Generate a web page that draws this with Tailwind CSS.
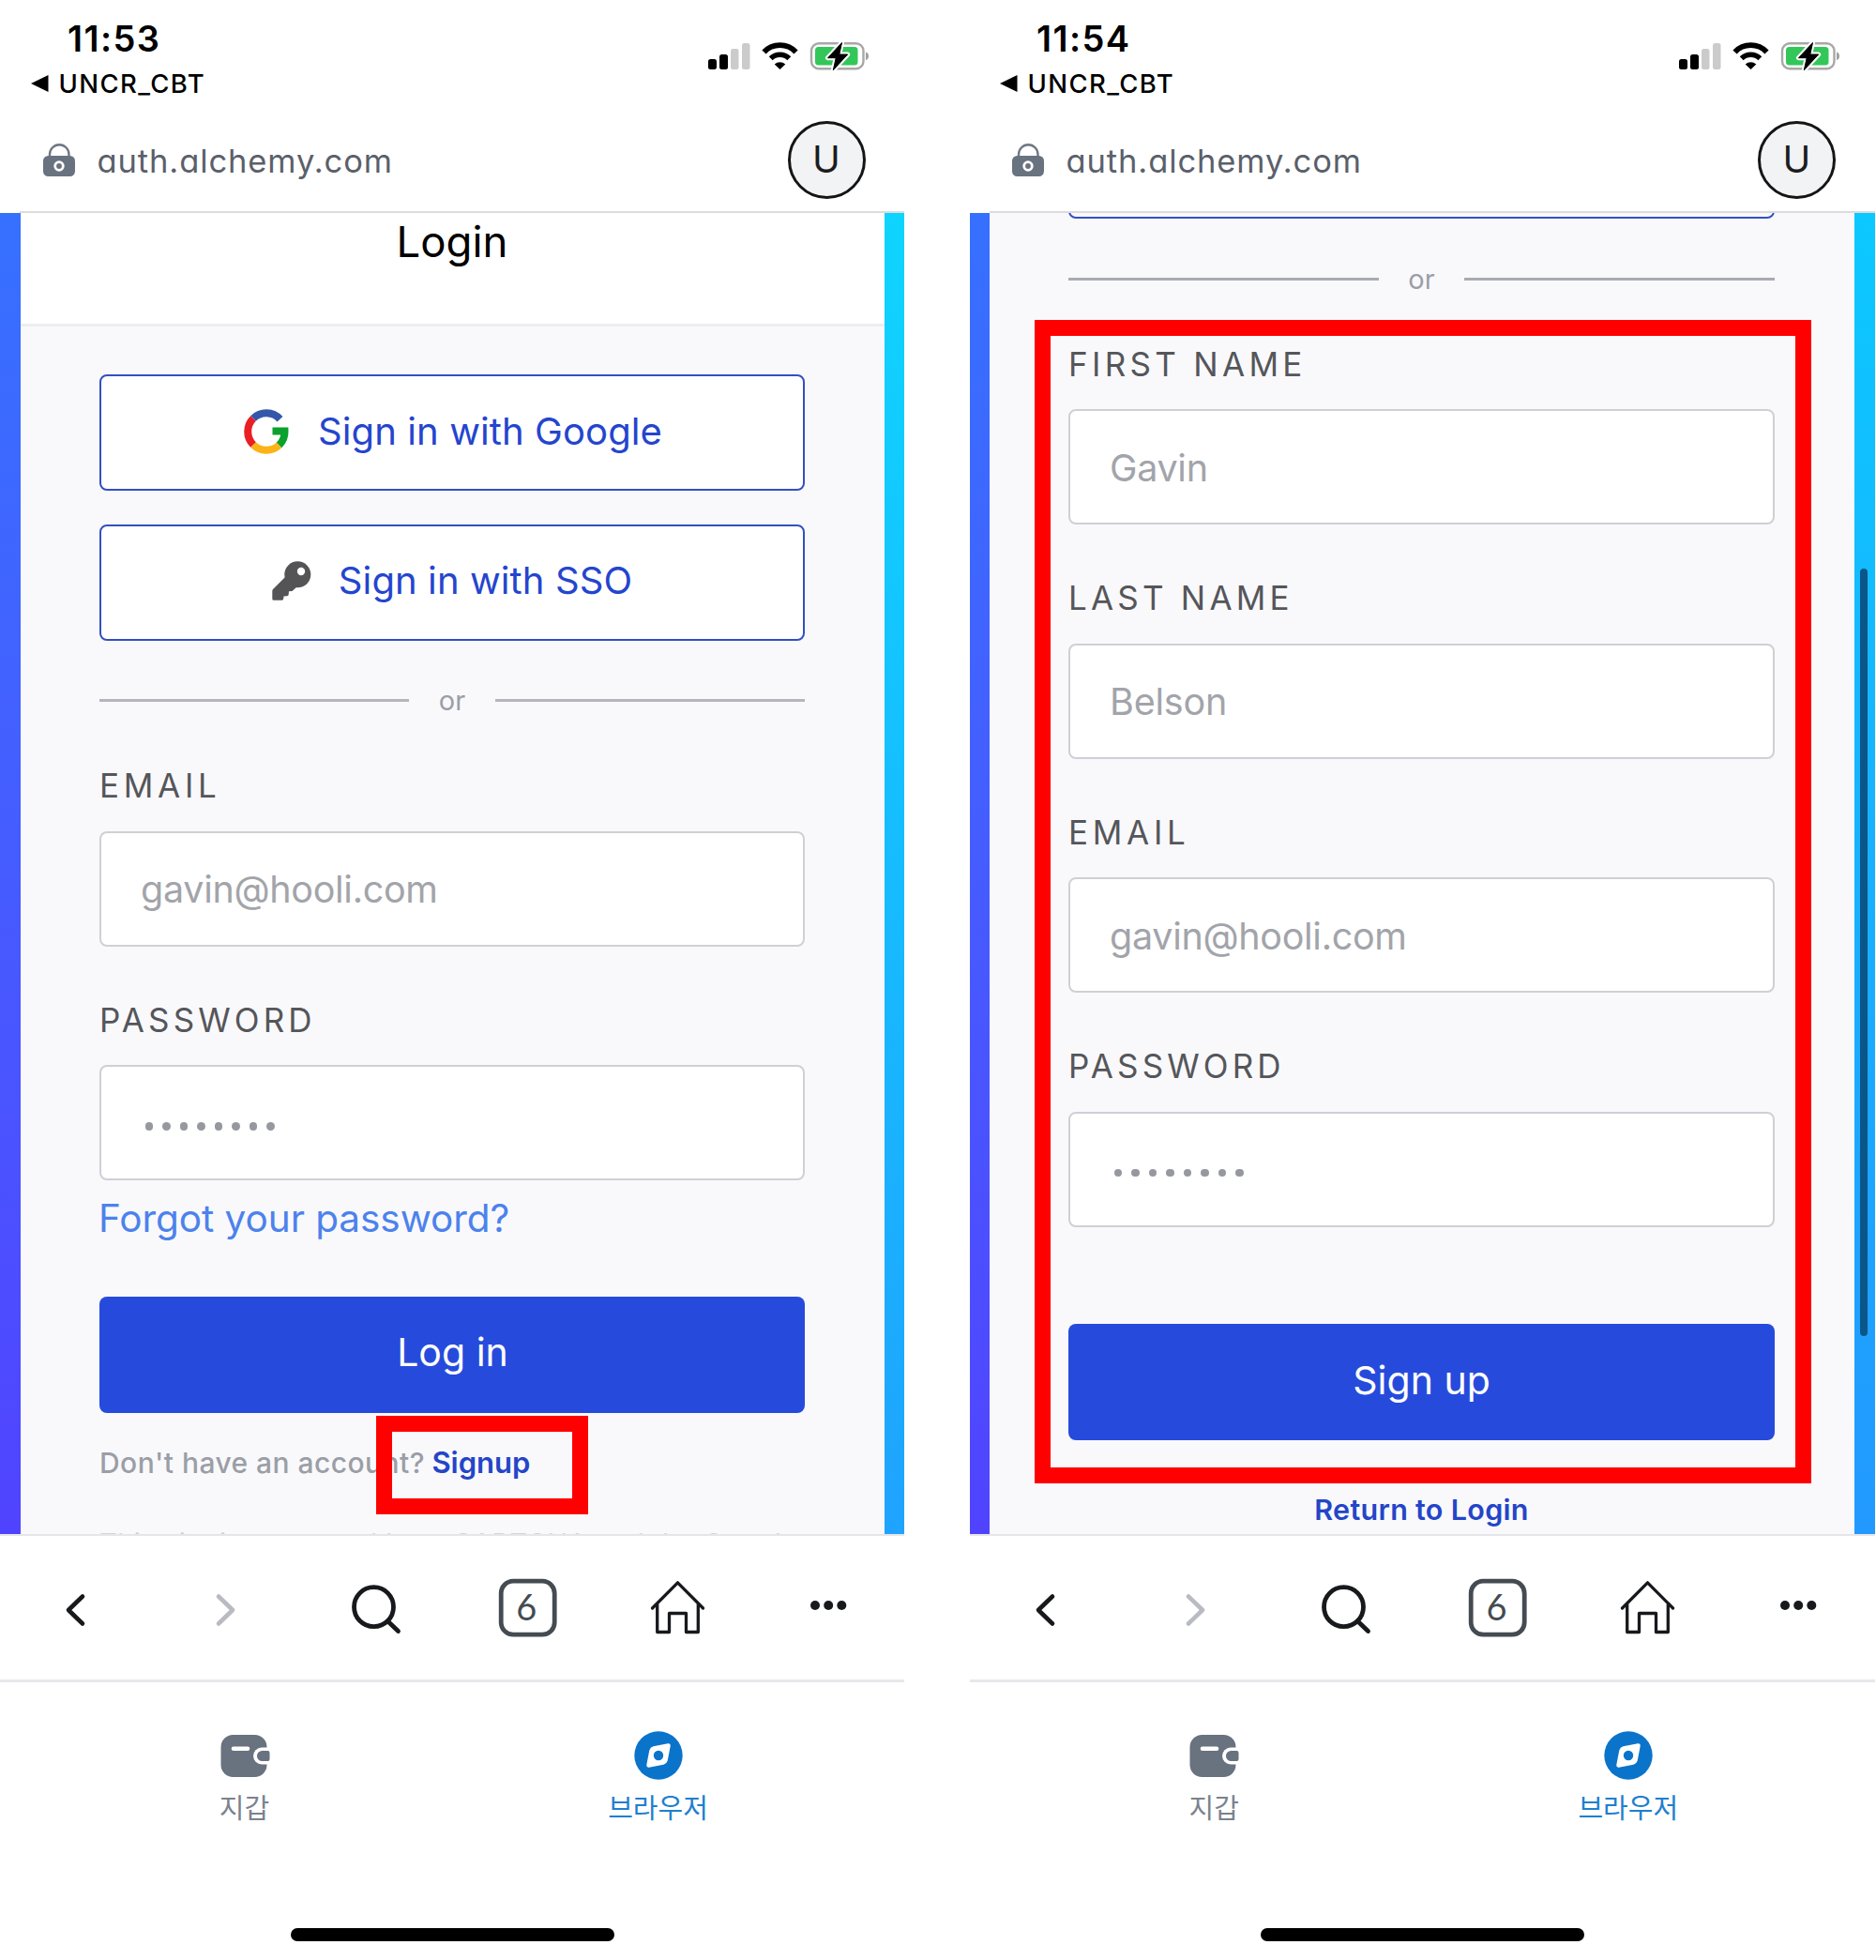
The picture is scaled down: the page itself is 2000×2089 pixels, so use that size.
<!DOCTYPE html>
<html lang="ko">
<head>
<meta charset="utf-8">
<title>Alchemy login and sign up</title>
<script src="https://cdn.jsdelivr.net/npm/@tailwindcss/browser@4"></script>
</head>
<body class="w-[2000px] h-[2089px] overflow-hidden bg-white font-['Inter','Noto_Sans_CJK_KR',sans-serif]">

<!-- Shared icons -->
<svg class="hidden">
  <symbol id="status" viewBox="0 0 172 32">
    <rect x="0" y="19" width="9" height="11" rx="2.5"/>
    <rect x="12" y="14" width="9" height="16" rx="2.5"/>
    <rect x="24" y="8" width="8.5" height="22" rx="2.5" fill="#cbcbcb"/>
    <rect x="36" y="2" width="8.5" height="28" rx="2.5" fill="#cbcbcb"/>
    <path d="M59.5 11.5a23.5 23.5 0 0 1 34 0" fill="none" stroke="#000" stroke-width="5.8"/>
    <path d="M66.7 18.3a14 14 0 0 1 19.6 0" fill="none" stroke="#000" stroke-width="5.6"/>
    <path d="M76.5 30l-5.8-5.6a8.6 8.6 0 0 1 11.6 0z"/>
    <rect x="110" y="2.2" width="55.5" height="27" rx="8" fill="#fff" stroke="#a8a8a8" stroke-width="2.4"/>
    <rect x="114" y="6" width="45.5" height="19.6" rx="3.5" fill="#33c759"/>
    <path d="M168 11.5c4 1 4 7.5 0 8.5z" fill="#a0a0a0"/>
    <path d="M142.5 1.5L127.5 17.7h8.7L133.300 30.700 148.700 14h-8.900z" stroke="#fff" stroke-width="5" stroke-linejoin="round"/>
    <path d="M142.500 1.500L127.500 17.700h8.700L133.300 30.700 148.700 14h-8.900z" stroke="#000" stroke-width="1" stroke-linejoin="round"/>
  </symbol>
  <symbol id="lock" viewBox="0 0 34 35">
    <path d="M7 15V11.500a10 10 0 0 1 20.500 0V15" fill="none" stroke="#6f7783" stroke-width="2.400"/>
    <rect x="0" y="13" width="34" height="22" rx="5.500" fill="#69727f"/>
    <circle cx="17" cy="24" r="4.300" fill="#69727f" stroke="#fff" stroke-width="2.800"/>
  </symbol>
  <symbol id="back" viewBox="0 0 64 64">
    <path d="M40 19.500L25 34 40 48.500" fill="none" stroke="#17191c" stroke-width="4.600" stroke-linecap="round" stroke-linejoin="round"/>
  </symbol>
  <symbol id="forward" viewBox="0 0 64 64">
    <path d="M24 19.500L39 34 24 48.500" fill="none" stroke="#b9bbc2" stroke-width="4.600" stroke-linecap="round" stroke-linejoin="round"/>
  </symbol>
  <symbol id="search" viewBox="0 0 64 64">
    <circle cx="28.500" cy="30.700" r="21" fill="none" stroke="#17191c" stroke-width="4.800"/>
    <path d="M43.500 46L54.500 56.500" stroke="#17191c" stroke-width="4.800" stroke-linecap="round"/>
  </symbol>
  <symbol id="tabs" viewBox="0 0 64 64">
    <rect x="4.200" y="3.200" width="57" height="57" rx="13" fill="none" stroke="#454b52" stroke-width="4.800"/>
  </symbol>
  <symbol id="home" viewBox="0 0 64 64">
    <path d="M4.500 32L31.500 4.800 58.500 32M9.700 28V57.500H22.500V37.500H40.500V57.500H53.300V28" fill="none" stroke="#17191c" stroke-width="3.300" stroke-linecap="round" stroke-linejoin="round"/>
  </symbol>
  <symbol id="more" viewBox="0 0 64 64">
    <g fill="#17191c"><circle cx="17" cy="29" r="5"/><circle cx="31.200" cy="29" r="5"/><circle cx="45.300" cy="29" r="5"/></g>
  </symbol>
  <symbol id="wallet" viewBox="0 0 56 52">
    <rect x="2.500" y="4" width="49" height="45" rx="13" fill="#69727f"/>
    <path d="M16 18.700h15" stroke="#fff" stroke-width="4.600" stroke-linecap="round"/>
    <path d="M56 17.500H46a9 9 0 0 0 0 18H56z" fill="#fff"/>
    <path d="M46.500 21h6q2 0 2 2v7q0 2-2 2h-6a5.500 5.500 0 0 1 0-11z" fill="#69727f"/>
  </symbol>
  <symbol id="compass" viewBox="0 0 52 52">
    <circle cx="26" cy="26" r="25.700" fill="#0a74cb"/>
    <path d="M36.500 15.500L21 18.500Q19 19 18.500 21L15.500 36.500 31 33.500Q33 33 33.500 31z" fill="#fff" stroke="#fff" stroke-width="4.500" stroke-linejoin="round"/>
    <circle cx="26" cy="26" r="5.200" fill="#0a74cb"/>
  </symbol>
</svg>

<main class="flex gap-[69.5px]">

  <!-- Login -->
  <section class="relative w-[964px] shrink-0 h-[2089px] flex flex-col">
    <header class="h-[115px] flex justify-between items-start pl-[33px] pr-[37px]">
      <div class="pt-[19px]">
        <div class="h-[44px] leading-[44px] pl-[39px] text-[38px] font-semibold tracking-[1.4px]">11:53</div>
        <div class="h-[52px] flex items-center gap-[10.5px] text-[27.5px] font-medium tracking-[1.4px] leading-[52px]">
          <svg class="w-[19px] h-[18px]" viewBox="0 0 19 18"><path d="M0 9L18.5 0V18z"/></svg><span>UNCR_CBT</span>
        </div>
      </div>
      <svg class="w-[172px] h-[32px] mt-[44px]"><use href="#status"/></svg>
    </header>
    <div class="h-[110px] flex items-center pl-[45.5px] pr-[41.5px]">
      <svg class="w-[34px] h-[35px]"><use href="#lock"/></svg>
      <span class="ml-[24px] pt-[4px] text-[34.5px] tracking-[0.9px] text-[#5a606b] [font-feature-settings:'cv11']">auth.alchemy.com</span>
      <span class="ml-auto w-[83px] h-[83px] rounded-full border-3 border-[#151515] bg-[#f2f3f5] flex items-center justify-center text-[40px] text-[#1c1c1e]">U</span>
    </div>
    <div class="h-[2px] ml-[21px] bg-[#dcdcde]"></div>

    <div class="h-[1408px] flex overflow-hidden">
      <div class="w-[21.5px] bg-linear-to-b from-[#3670ff] to-[#5043ff]"></div>
      <div class="flex-1 bg-[#f9f9fc]">
        <h1 class="h-[121px] bg-white border-b-[3px] border-[#ededf2] text-center leading-[62px] text-[45.5px]">Login</h1>
        <div class="px-[84.5px] pt-[51px] whitespace-nowrap">
          <button class="w-full h-[124px] pb-[3px] pl-[2px] flex items-center justify-center gap-[31px] rounded-[8px] border-[2.5px] border-[#3350c0] bg-white text-[40px] tracking-[0.1px] text-[#2445ce]">
            <svg class="w-[48px] h-[48px]" viewBox="0 0 48 48" fill="none" stroke-width="8">
              <path d="M10 38A19.800 19.800 0 0 0 37.600 38.400" stroke="#fbb315"/>
              <path d="M10 10A19.800 19.800 0 0 0 10 38" stroke="#ea1f24"/>
              <path d="M38.500 10.700A19.800 19.800 0 0 0 10 10" stroke="#3458a9"/>
              <path d="M37.600 38.400A19.800 19.800 0 0 0 43.500 23.500H30.500" stroke="#0ba12d"/>
            </svg>
            <span>Sign in with Google</span>
          </button>
          <button class="w-full h-[124px] mt-[35.5px] pb-[3px] flex items-center justify-center gap-[29px] rounded-[8px] border-[2.5px] border-[#3350c0] bg-white text-[40px] tracking-[0.1px] text-[#2445ce]">
            <svg class="w-[42px] h-[42px]" viewBox="0 0 42 42" fill="#545456"><circle cx="27.300" cy="14.300" r="14"/><path d="M15 16L1 30Q.3 30.800.3 32V40.200Q.3 41.700 1.800 41.700H10.500Q12 41.700 12.200 40.300L12.500 37.500 16 37.200Q17.600 37 17.700 35.500L18 32.300 21.500 32 26 28z"/><circle cx="31" cy="11" r="4.200" fill="#fff"/></svg>
            <span>Sign in with SSO</span>
          </button>
          <div class="mt-[44px] h-[40px] flex items-center text-[29px] leading-[40px] text-[#9b9ea6]">
            <span class="w-[330px] h-[3px] bg-[#b4b6bc]"></span><span class="flex-1 text-center">or</span><span class="w-[330px] h-[3px] bg-[#b4b6bc]"></span>
          </div>
          <div class="mt-[45px] h-[50px] leading-[50px] text-[35px] tracking-[4.7px] text-[#55565a]">EMAIL</div>
          <div class="mt-[24px] h-[123px] rounded-[8px] border-[2.5px] border-[#cfd0d5] bg-white px-[42px] pt-[4px] flex items-center text-[39.5px] tracking-[-0.3px] text-[#a2a4aa]">gavin@hooli.com</div>
          <div class="mt-[53px] h-[50px] leading-[50px] text-[35px] tracking-[4.1px] text-[#55565a]">PASSWORD</div>
          <div class="mt-[23.5px] h-[123px] rounded-[8px] border-[2.5px] border-[#cfd0d5] bg-white px-[46.5px] pt-[8px] flex items-center gap-[10px]">
            <i class="size-[8.5px] rounded-full bg-[#96989f]"></i><i class="size-[8.5px] rounded-full bg-[#96989f]"></i><i class="size-[8.5px] rounded-full bg-[#96989f]"></i><i class="size-[8.5px] rounded-full bg-[#96989f]"></i><i class="size-[8.5px] rounded-full bg-[#96989f]"></i><i class="size-[8.5px] rounded-full bg-[#96989f]"></i><i class="size-[8.5px] rounded-full bg-[#96989f]"></i><i class="size-[8.5px] rounded-full bg-[#96989f]"></i>
          </div>
          <div class="mt-[15px] -ml-[1px] h-[50px] leading-[51px] text-[40.5px] tracking-[-0.05px] text-[#4c82ec]">Forgot your password?</div>
          <button class="w-full mt-[58.5px] h-[124px] pb-[3px] pl-[1px] flex items-center justify-center rounded-[8px] bg-[#264bdc] text-[41px] text-white">Log in</button>
          <p class="mt-[33px] h-[40px] leading-[40px] text-[30px] tracking-[0.45px] font-medium text-[#9b9ea6]">Don't have an account? <span class="-ml-[1px] text-[31px] font-semibold tracking-[0px] text-[#2445c8]">Signup</span></p>
          <p class="mt-[46.5px] h-[40px] leading-[40px] text-[29px] tracking-[0.5px] text-[#d2d4d9]">This site is protected by reCAPTCHA and the Google</p>
        </div>
      </div>
      <div class="w-[21.5px] bg-linear-to-b from-[#0fd4ff] to-[#1fa3ff]"></div>
    </div>

    <nav class="h-[155px] border-t-2 border-[#e6e6ea] grid grid-cols-6 items-center justify-items-center">
      <svg class="size-[64px]"><use href="#back"/></svg>
      <svg class="size-[64px]"><use href="#forward"/></svg>
      <svg class="size-[64px]"><use href="#search"/></svg>
      <div class="relative size-[64px]">
        <svg class="size-[64px]"><use href="#tabs"/></svg>
        <span class="absolute inset-0 pr-[2px] text-center leading-[61px] font-['Lato'] text-[38px] text-[#454b52]">6</span>
      </div>
      <svg class="size-[64px]"><use href="#home"/></svg>
      <svg class="size-[64px]"><use href="#more"/></svg>
    </nav>
    <div class="h-[3px] bg-[#e7e8eb]"></div>
    <div class="grid grid-cols-2 pl-[40px] pr-[42px] pt-[52px] h-[262px] text-[29px] leading-[40px] content-start font-['Noto_Sans_CJK_KR',sans-serif]">
      <div class="flex flex-col items-center text-[#7a828e]"><svg class="w-[56px] h-[52px]"><use href="#wallet"/></svg><span class="mt-[8px]">지갑</span></div>
      <div class="flex flex-col items-center text-[#1f7fce]"><svg class="w-[52px] h-[52px]"><use href="#compass"/></svg><span class="mt-[8px]">브라우저</span></div>
    </div>
    <div class="w-[345px] h-[14px] rounded-full bg-black ml-[310px]"></div>

    <div class="absolute left-[401px] top-[1509px] w-[226px] h-[105px] border-[17px] border-[#ff0000]"></div>
  </section>

  <!-- Sign up -->
  <section class="relative w-[965px] shrink-0 h-[2089px] flex flex-col">
    <header class="h-[115px] flex justify-between items-start pl-[32.5px] pr-[37px]">
      <div class="pt-[19px]">
        <div class="h-[44px] leading-[44px] pl-[39px] text-[38px] font-semibold tracking-[1.4px]">11:54</div>
        <div class="h-[52px] flex items-center gap-[10.5px] text-[27.5px] font-medium tracking-[1.4px] leading-[52px]">
          <svg class="w-[19px] h-[18px]" viewBox="0 0 19 18"><path d="M0 9L18.5 0V18z"/></svg><span>UNCR_CBT</span>
        </div>
      </div>
      <svg class="w-[172px] h-[32px] mt-[44px]"><use href="#status"/></svg>
    </header>
    <div class="h-[110px] flex items-center pl-[45px] pr-[41.5px]">
      <svg class="w-[34px] h-[35px]"><use href="#lock"/></svg>
      <span class="ml-[24px] pt-[4px] text-[34.5px] tracking-[0.9px] text-[#5a606b] [font-feature-settings:'cv11']">auth.alchemy.com</span>
      <span class="ml-auto w-[83px] h-[83px] rounded-full border-3 border-[#151515] bg-[#f2f3f5] flex items-center justify-center text-[40px] text-[#1c1c1e]">U</span>
    </div>
    <div class="h-[2px] ml-[21px] bg-[#dcdcde]"></div>

    <div class="h-[1408px] flex overflow-hidden">
      <div class="w-[21.5px] bg-linear-to-b from-[#3670ff] to-[#5043ff]"></div>
      <div class="flex-1 bg-[#f9f9fc]">
        <div class="pl-[84px] pr-[85px] -mt-[118px] whitespace-nowrap">
          <div class="h-[124px] rounded-[8px] border-[2.5px] border-[#3350c0] bg-[#f9f9fc]"></div>
          <div class="mt-[44.5px] h-[40px] flex items-center text-[29px] leading-[39px] text-[#9b9ea6]">
            <span class="w-[331px] h-[3px] bg-[#a9abb2]"></span><span class="flex-1 text-center">or</span><span class="w-[331px] h-[3px] bg-[#a9abb2]"></span>
          </div>
          <div class="mt-[45px] h-[50px] leading-[50px] text-[35px] tracking-[4.3px] text-[#55565a]">FIRST NAME</div>
          <div class="mt-[23.5px] h-[123px] rounded-[8px] border-[2.5px] border-[#cfd0d5] bg-white px-[42px] pt-[4px] flex items-center text-[39.5px] tracking-[-0.3px] text-[#a2a4aa]">Gavin</div>
          <div class="mt-[53px] h-[50px] leading-[50px] text-[35px] tracking-[4.2px] text-[#55565a]">LAST NAME</div>
          <div class="mt-[23.5px] h-[123px] rounded-[8px] border-[2.5px] border-[#cfd0d5] bg-white px-[42px] pt-[4px] flex items-center text-[39.5px] tracking-[-0.2px] text-[#a2a4aa]">Belson</div>
          <div class="mt-[53px] h-[50px] leading-[50px] text-[35px] tracking-[4.7px] text-[#55565a]">EMAIL</div>
          <div class="mt-[23.5px] h-[123px] rounded-[8px] border-[2.5px] border-[#cfd0d5] bg-white px-[42px] pt-[4px] flex items-center text-[39.5px] tracking-[-0.3px] text-[#a2a4aa]">gavin@hooli.com</div>
          <div class="mt-[53px] h-[50px] leading-[50px] text-[35px] tracking-[4.1px] text-[#55565a]">PASSWORD</div>
          <div class="mt-[23.5px] h-[123px] rounded-[8px] border-[2.5px] border-[#cfd0d5] bg-white px-[46.5px] pt-[8px] flex items-center gap-[10px]">
            <i class="size-[8.5px] rounded-full bg-[#96989f]"></i><i class="size-[8.5px] rounded-full bg-[#96989f]"></i><i class="size-[8.5px] rounded-full bg-[#96989f]"></i><i class="size-[8.5px] rounded-full bg-[#96989f]"></i><i class="size-[8.5px] rounded-full bg-[#96989f]"></i><i class="size-[8.5px] rounded-full bg-[#96989f]"></i><i class="size-[8.5px] rounded-full bg-[#96989f]"></i><i class="size-[8.5px] rounded-full bg-[#96989f]"></i>
          </div>
          <button class="w-full mt-[103px] h-[124px] pb-[1px] flex items-center justify-center rounded-[8px] bg-[#264bdc] text-[41px] text-white">Sign up</button>
          <p class="mt-[54px] h-[40px] leading-[40px] text-center text-[30.5px] tracking-[0.3px] font-semibold text-[#2445c8]">Return to Login</p>
        </div>
      </div>
      <div class="w-[21.5px] bg-linear-to-b from-[#0cc8ff] to-[#2299ff]"></div>
    </div>

    <nav class="h-[155px] border-t-2 border-[#e6e6ea] grid grid-cols-6 items-center justify-items-center">
      <svg class="size-[64px]"><use href="#back"/></svg>
      <svg class="size-[64px]"><use href="#forward"/></svg>
      <svg class="size-[64px]"><use href="#search"/></svg>
      <div class="relative size-[64px]">
        <svg class="size-[64px]"><use href="#tabs"/></svg>
        <span class="absolute inset-0 pr-[2px] text-center leading-[61px] font-['Lato'] text-[38px] text-[#454b52]">6</span>
      </div>
      <svg class="size-[64px]"><use href="#home"/></svg>
      <svg class="size-[64px]"><use href="#more"/></svg>
    </nav>
    <div class="h-[3px] bg-[#e7e8eb]"></div>
    <div class="grid grid-cols-2 pl-[40px] pr-[42px] pt-[52px] h-[262px] text-[29px] leading-[40px] content-start font-['Noto_Sans_CJK_KR',sans-serif]">
      <div class="flex flex-col items-center text-[#7a828e]"><svg class="w-[56px] h-[52px]"><use href="#wallet"/></svg><span class="mt-[8px]">지갑</span></div>
      <div class="flex flex-col items-center text-[#1f7fce]"><svg class="w-[52px] h-[52px]"><use href="#compass"/></svg><span class="mt-[8px]">브라우저</span></div>
    </div>
    <div class="w-[345px] h-[14px] rounded-full bg-black ml-[310.5px]"></div>

    <div class="absolute left-[949px] top-[606px] w-[8px] h-[818px] rounded-full bg-[#0b5688]"></div>
    <div class="absolute left-[69.5px] top-[341px] w-[828px] h-[1240px] border-[17px] border-[#ff0000]"></div>
  </section>
</main>
</body>
</html>
